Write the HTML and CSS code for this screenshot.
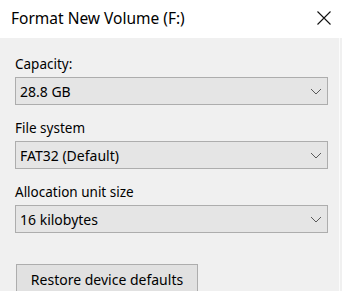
FILE: index.html
```html
<!DOCTYPE html>
<html lang="en">
<head>
  <meta charset="UTF-8" />
  <meta name="viewport" content="width=device-width, initial-scale=1.0" />
  <title>Format New Volume (F:)</title>
  <link rel="stylesheet" href="styles.css">
</head>
<body>
  <div class="window">
    <div class="titlebar">
      <span class="title">Format New Volume (F:)</span>
      <span class="close">
        <svg width="16" height="16" viewBox="0 0 16 16"><path d="M1.5 1.5 L14.5 14.5 M14.5 1.5 L1.5 14.5" stroke="#111" stroke-width="1.1" fill="none"/></svg>
      </span>
    </div>

    <div class="content">
      <div class="field">
        <div class="label">Capacity:</div>
        <div class="combo">
          <span>28.8 GB</span>
          <svg class="chev" width="12" height="7" viewBox="0 0 12 7"><polyline points="1,1 6,6 11,1" stroke="#5a5a5a" stroke-width="1" fill="none"/></svg>
        </div>
      </div>

      <div class="field">
        <div class="label">File system</div>
        <div class="combo">
          <span>FAT32 (Default)</span>
          <svg class="chev" width="12" height="7" viewBox="0 0 12 7"><polyline points="1,1 6,6 11,1" stroke="#5a5a5a" stroke-width="1" fill="none"/></svg>
        </div>
      </div>

      <div class="field">
        <div class="label">Allocation unit size</div>
        <div class="combo">
          <span>16 kilobytes</span>
          <svg class="chev" width="12" height="7" viewBox="0 0 12 7"><polyline points="1,1 6,6 11,1" stroke="#5a5a5a" stroke-width="1" fill="none"/></svg>
        </div>
      </div>

      <button class="btn">Restore device defaults</button>
    </div>
  </div>
</body>
</html>
```

FILE: styles.css
```css
body {
  margin: 0;
  background-color: #f0f0f0;
  color: #000;
  font-family: 'Noto Sans', sans-serif;
  overflow: hidden;
}

.window {
  width: 339px;
  height: 291px;
  border-right: 1px solid #fbfbfb;
  background-color: #f0f0f0;
}

.titlebar {
  height: 38px;
  background-color: #fff;
  display: flex;
  align-items: center;
  justify-content: space-between;
  padding: 0 10px 0 11px;
  box-sizing: border-box;
  width: 342px;
}

.title {
  font-size: 15.5px;
  margin-top: -2px;
}

.close {
  display: flex;
  margin-top: -3px;
}

.content {
  padding: 17px 0 0 15px;
}

.field {
  margin-bottom: 14px;
}

.label {
  font-size: 13.5px;
  height: 22px;
  line-height: 18px;
}

.combo {
  width: 313px;
  height: 28px;
  box-sizing: border-box;
  border: 1px solid #adadad;
  background-color: #e5e5e5;
  display: flex;
  align-items: center;
  justify-content: space-between;
  padding: 0 5px 0 4px;
  font-size: 14px;
}

.btn {
  margin-top: 17px;
  margin-left: 1px;
  width: 182px;
  height: 30px;
  border: 1px solid #adadad;
  background-color: #e1e1e1;
  font-family: 'Noto Sans', sans-serif;
  font-size: 14px;
  color: #000;
  padding: 0;
}
```
